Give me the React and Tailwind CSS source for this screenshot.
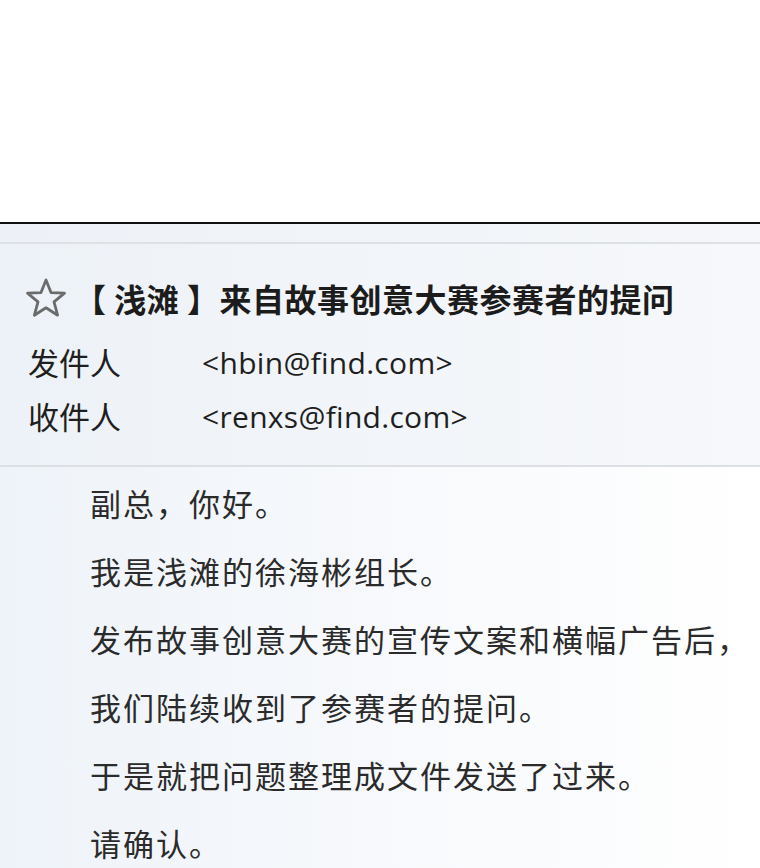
const cjk = { fontFamily: '"Noto Sans CJK SC", "Noto Sans", sans-serif' };
const latin = { fontFamily: '"Open Sans", "Noto Sans CJK SC", sans-serif' };

const StarIcon = () => (
  <svg width="44" height="40" viewBox="0 0 44 40" fill="none">
    <path
      d="M22 2 L27 14.6 L40.5 15.2 L30 23.8 L33.6 37.2 L22 29.8 L10.4 37.2 L14 23.8 L3.5 15.2 L17 14.6 Z"
      stroke="#6b6b6b"
      strokeWidth="2.8"
      strokeLinejoin="round"
    />
  </svg>
);

const lines = [
  '副总，你好。',
  '我是浅滩的徐海彬组长。',
  '发布故事创意大赛的宣传文案和横幅广告后，',
  '我们陆续收到了参赛者的提问。',
  '于是就把问题整理成文件发送了过来。',
  '请确认。',
];

export default function App() {
  return (
    <div className="w-[760px] h-[868px] overflow-hidden bg-white">
      <div className="h-[222px] bg-white" />
      <div className="h-[2px] bg-[#111]" />
      <div className="h-[18px] bg-gradient-to-r from-[#edf1f7] to-[#f5f7fa]" />
      <div className="h-[2px] bg-[#dde1e6]" />

      {/* header */}
      <div className="h-[221px] bg-gradient-to-r from-[#edf2f8] via-[#f2f5f9] to-[#f6f8fb] pt-[34px]">
        <div className="flex items-center h-[40px] pl-[24px]">
          <StarIcon />
          <div
            className="ml-[6px] text-[32px] font-bold tracking-[0.5px] text-[#1c1c1c] leading-[40px] whitespace-nowrap"
            style={cjk}
          >
            【 浅滩 】来自故事创意大赛参赛者的提问
          </div>
        </div>
        <div className="mt-[17px] pl-[28px]">
          <div className="flex items-center h-[54px]">
            <span className="w-[174px] text-[31px] text-[#1f1f1f]" style={cjk}>发件人</span>
            <span className="text-[30px] tracking-[0.3px] text-[#1f1f1f]" style={latin}>&lt;hbin@find.com&gt;</span>
          </div>
          <div className="flex items-center h-[54px]">
            <span className="w-[174px] text-[31px] text-[#1f1f1f]" style={cjk}>收件人</span>
            <span className="text-[30px] tracking-[0.3px] text-[#1f1f1f]" style={latin}>&lt;renxs@find.com&gt;</span>
          </div>
        </div>
      </div>
      <div className="h-[2px] bg-[#dcdfe3]" />

      {/* body */}
      <div className="h-[401px] bg-gradient-to-r from-[#eef3f9] via-[#f7f9fc] to-white pt-[2px] pl-[90px]">
        {lines.map((t) => (
          <div
            key={t}
            className="h-[68px] leading-[68px] text-[31px] tracking-[2px] text-[#2b2b2b] whitespace-nowrap"
            style={cjk}
          >
            {t}
          </div>
        ))}
      </div>
    </div>
  );
}
